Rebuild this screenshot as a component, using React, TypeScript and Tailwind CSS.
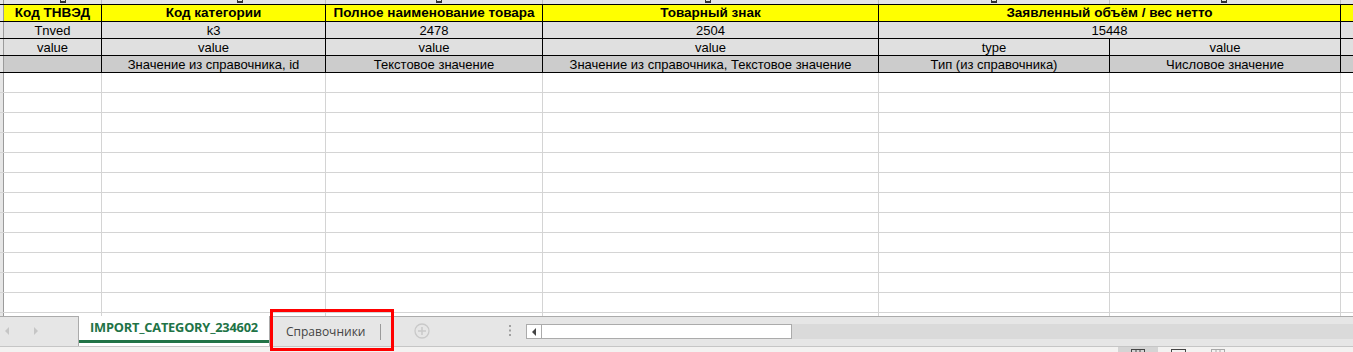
import React from "react";

const W = { A: 98, B: 224, C: 217, D: 336, E: 231, F: 231, G: 40 };

type Cell = { w: number; text?: string; bold?: boolean };

function Row({
  cells,
  h,
  bg,
  border,
  textCls,
}: {
  cells: Cell[];
  h: string;
  bg: string;
  border: string;
  textCls: string;
}) {
  return (
    <div className={`flex shrink-0 ${h} border-b ${border}`}>
      <div className="w-[4px] shrink-0 bg-[#e6e6e6] border-r border-[#9b9b9b]" />
      {cells.map((c, i) => (
        <div
          key={i}
          style={{ width: c.w }}
          className={`shrink-0 ${bg} border-r ${border} flex items-center justify-center overflow-hidden whitespace-nowrap leading-none ${textCls}`}
        >
          {c.text}
        </div>
      ))}
    </div>
  );
}

export default function App() {
  const font = "font-['Liberation_Sans',Arial,sans-serif]";
  const emptyRows = Array.from({ length: 12 });
  return (
    <div className="w-[1353px] h-[352px] overflow-hidden relative bg-white flex flex-col">
      {/* grid area */}
      <div className="h-[316px] shrink-0 overflow-hidden flex flex-col">
        {/* partial top row */}
        <div className="flex shrink-0 h-[5px] border-b border-black relative">
          <div className="w-[4px] shrink-0 bg-[#e6e6e6] border-r border-[#9b9b9b]" />
          {[W.A, W.B, W.C, W.D, W.E, W.F, W.G].map((w, i) => (
            <div key={i} style={{ width: w }} className="shrink-0 bg-[#e4e4e4] border-r border-[#bdbdbd]" />
          ))}
          {[60, 237, 436, 705, 991, 1221].map((x, i) => (
            <div key={i} className="absolute top-0 h-[3px] w-[6px] border-b-2 border-x border-[#333]" style={{ left: x }} />
          ))}
        </div>
        <Row
          h="h-[17px]"
          bg="bg-[#ffff00]"
          border="border-black"
          textCls={`${font} text-[13.5px] font-bold text-black`}
          cells={[
            { w: W.A, text: "Код ТНВЭД" },
            { w: W.B, text: "Код категории" },
            { w: W.C, text: "Полное наименование товара" },
            { w: W.D, text: "Товарный знак" },
            { w: W.E + W.F, text: "Заявленный объём / вес нетто" },
            { w: W.G },
          ]}
        />
        <Row
          h="h-[17px]"
          bg="bg-[#e0e0e0]"
          border="border-black"
          textCls={`${font} text-[13px] text-black`}
          cells={[
            { w: W.A, text: "Tnved" },
            { w: W.B, text: "k3" },
            { w: W.C, text: "2478" },
            { w: W.D, text: "2504" },
            { w: W.E + W.F, text: "15448" },
            { w: W.G },
          ]}
        />
        <Row
          h="h-[17px]"
          bg="bg-[#e0e0e0]"
          border="border-black"
          textCls={`${font} text-[13px] text-black`}
          cells={[
            { w: W.A, text: "value" },
            { w: W.B, text: "value" },
            { w: W.C, text: "value" },
            { w: W.D, text: "value" },
            { w: W.E, text: "type" },
            { w: W.F, text: "value" },
            { w: W.G },
          ]}
        />
        <Row
          h="h-[17px]"
          bg="bg-[#cccccc]"
          border="border-black"
          textCls={`${font} text-[13px] text-black`}
          cells={[
            { w: W.A, text: "" },
            { w: W.B, text: "Значение из справочника, id" },
            { w: W.C, text: "Текстовое значение" },
            { w: W.D, text: "Значение из справочника, Текстовое значение" },
            { w: W.E, text: "Тип (из справочника)" },
            { w: W.F, text: "Числовое значение" },
            { w: W.G },
          ]}
        />
        {emptyRows.map((_, r) => (
          <div key={r} className="flex shrink-0 h-[20px] border-b border-[#d4d4d4]">
            <div className="w-[4px] shrink-0 bg-[#e6e6e6] border-r border-[#9b9b9b]" />
            {[W.A, W.B, W.C, W.D, W.E, W.F, W.G].map((w, i) => (
              <div key={i} style={{ width: w }} className="shrink-0 border-r border-[#d4d4d4]" />
            ))}
          </div>
        ))}
        <div className="flex shrink-0 h-[10px]">
          <div className="w-[4px] shrink-0 bg-[#e6e6e6] border-r border-[#9b9b9b]" />
          {[W.A, W.B, W.C, W.D, W.E, W.F, W.G].map((w, i) => (
            <div key={i} style={{ width: w }} className="shrink-0 border-r border-[#d4d4d4]" />
          ))}
        </div>
      </div>

      {/* sheet tab bar */}
      <div className="h-[30px] shrink-0 bg-[#e6e6e6] flex items-stretch relative">
        {/* nav arrows */}
        <div className="w-[78px] shrink-0 border-t border-[#ababab] flex items-center">
          <svg width="78" height="29" viewBox="0 0 78 29">
            <path d="M9 10 L5 14 L9 18 Z" fill="#c6c6c6" />
            <path d="M34 10 L38 14 L34 18 Z" fill="#c6c6c6" />
          </svg>
        </div>
        {/* active tab */}
        <div className="w-[192px] shrink-0 bg-white border-x border-[#ababab] flex flex-col">
          <div className="flex-1 flex items-center justify-center font-['Open_Sans','Noto_Sans',sans-serif] text-[12.8px] font-bold text-[#217346] tracking-[-0.2px]">
            IMPORT_CATEGORY_234602
          </div>
          <div className="h-[3px] bg-[#217346] mb-[3px]" />
        </div>
        {/* second tab */}
        <div className="w-[112px] shrink-0 border-t border-[#ababab] flex items-center">
          <span className="ml-[16px] font-['Open_Sans','Noto_Sans',sans-serif] text-[12px] text-[#444]">Справочники</span>
          <div className="ml-auto h-[16px] w-px bg-[#9a9a9a] mr-[1px]" />
        </div>
        {/* rest */}
        <div className="flex-1 border-t border-[#ababab] flex items-center relative">
          <svg width="140" height="29" viewBox="0 0 140 29" className="shrink-0">
            <circle cx="40" cy="14" r="7" fill="none" stroke="#c9c9c9" strokeWidth="1.3" />
            <path d="M36 14 H44 M40 10 V18" stroke="#c9c9c9" strokeWidth="1.5" />
            <rect x="127" y="8" width="2" height="2" fill="#a0a0a0" />
            <rect x="127" y="12.5" width="2" height="2" fill="#a0a0a0" />
            <rect x="127" y="17" width="2" height="2" fill="#a0a0a0" />
          </svg>
          {/* scrollbar */}
          <div className="flex-1 h-[15px] ml-[4px] bg-[#dadada] flex">
            <div className="w-[266px] h-[15px] bg-white border border-[#ababab] flex">
              <div className="w-[15px] h-full border-r border-[#ababab] flex items-center justify-center">
                <svg width="6" height="8" viewBox="0 0 6 8">
                  <path d="M5 0 L1 4 L5 8 Z" fill="#444" />
                </svg>
              </div>
            </div>
          </div>
        </div>
      </div>

      {/* status bar */}
      <div className="flex-1 bg-[#f3f2f1] border-t border-[#c6c6c6] relative">
        <div className="absolute left-[1118px] top-0 w-[40px] h-full bg-[#d4d4d4]" />
        <svg className="absolute left-0 top-0" width="1353" height="8" viewBox="0 0 1353 8">
          <g fill="none" stroke="#444" strokeWidth="1">
            <rect x="1131.5" y="2.5" width="13" height="10" />
            <path d="M1136 2.5 V10 M1140 2.5 V10" />
            <rect x="1171.5" y="2.5" width="14" height="10" />
            <path d="M1174 5.5 H1183" />
          </g>
          <g fill="none" stroke="#a8a8a8" strokeWidth="1">
            <rect x="1211.5" y="2.5" width="13" height="10" />
            <path d="M1216 2.5 V10 M1220 2.5 V10" />
          </g>
          <rect x="1306" y="5" width="5" height="2" fill="#555" />
        </svg>
      </div>

      {/* red highlight box */}
      <div className="absolute left-[270px] top-[309px] w-[124px] h-[42px] border-[3px] border-[#ff0000] pointer-events-none" />
    </div>
  );
}
